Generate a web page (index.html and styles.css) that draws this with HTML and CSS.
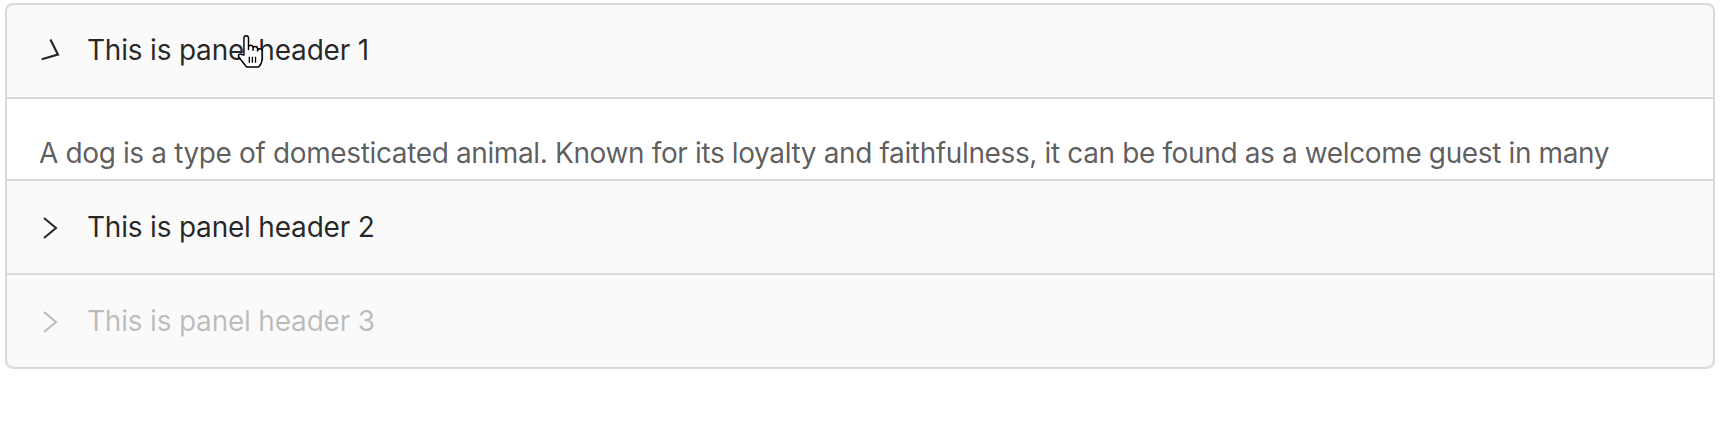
FILE: index.html
```html
<!DOCTYPE html>
<html lang="en">
<head>
    <meta charset="UTF-8">
    <meta name="viewport" content="width=device-width, initial-scale=1.0">
    <title>Collapse</title>
    <link rel="stylesheet" href="styles.css">
</head>
<body>
    <div class="collapse">
        <div class="item active">
            <div class="header">
                <svg class="arrow turning" viewBox="0 0 24 24"><path d="M6 2 L18 12 L6 22" /></svg>
                This is panel header 1
                <svg class="cursor" viewBox="0 0 26 30">
                    <path d="M7.5 17.5 V3.2 a1.9 1.9 0 0 1 3.8 0 V13 V11.3 a1.9 1.9 0 0 1 3.8 0 V13.5 V12.3 a1.9 1.9 0 0 1 3.8 0 V14.2 a1.9 1.9 0 0 1 3.8 0 V21 c0 3-1.6 5.2-3 6.6 H9.8 c-1.6-1.8-4.4-5.4-6.4-8.2 c-1.2-1.7 0.6-3.6 2.2-2.3 z" />
                    <path class="lines" d="M12 19 v5 M14.6 19 v5 M17.2 19 v5" />
                </svg>
            </div>
            <div class="content">
                <div class="content-box">
                    A dog is a type of domesticated animal. Known for its loyalty and faithfulness, it can be found as a welcome guest in many households across the world.
                </div>
            </div>
        </div>
        <div class="item">
            <div class="header">
                <svg class="arrow" viewBox="0 0 24 24"><path d="M6 2 L18 12 L6 22" /></svg>
                This is panel header 2
            </div>
        </div>
        <div class="item disabled">
            <div class="header">
                <svg class="arrow" viewBox="0 0 24 24"><path d="M6 2 L18 12 L6 22" /></svg>
                This is panel header 3
            </div>
        </div>
    </div>
</body>
</html>
```

FILE: styles.css
```css
body {
    margin: 0;
    background-color: #fff;
    font-family: Inter, "Noto Sans", sans-serif;
}
.collapse {
    margin: 3px 7px 0 5px;
    background-color: #fafafa;
    border: 2px solid #d9d9d9;
    border-bottom: 0;
    border-radius: 8px;
    font-size: 28px;
    line-height: 44px;
    letter-spacing: -0.2px;
}
.item {
    border-bottom: 2px solid #d9d9d9;
}
.item:last-child {
    border-radius: 0 0 8px 8px;
}
.header {
    position: relative;
    padding: 23px 32px 25px 80px;
    color: rgba(0, 0, 0, 0.85);
}
.item + .item .header {
    padding: 24px 32px 24px 80px;
}
.arrow {
    position: absolute;
    left: 31px;
    top: 35px;
    width: 24px;
    height: 24px;
    fill: none;
    stroke: currentColor;
    stroke-width: 2;
}
.arrow.turning {
    left: 33px;
    transform: rotate(24deg) scale(1.08);
}
.disabled .header {
    color: rgba(0, 0, 0, 0.25);
}
.content {
    background-color: #fff;
    border-top: 2px solid #d9d9d9;
    height: 80px;
    overflow: hidden;
    color: rgba(0, 0, 0, 0.65);
    letter-spacing: -0.37px;
}
.content-box {
    padding: 32px;
}
.cursor {
    position: absolute;
    left: 228px;
    top: 29px;
    width: 31px;
    height: 36px;
}
.cursor path {
    fill: #fff;
    stroke: #000;
    stroke-width: 1.2;
    stroke-linejoin: round;
}
.cursor .lines {
    fill: none;
    stroke-width: 1.1;
}
```
